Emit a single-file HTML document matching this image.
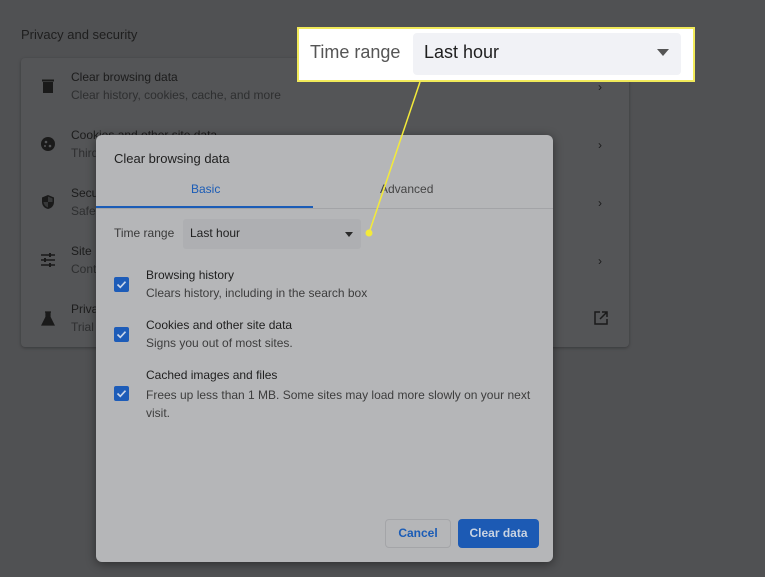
<!DOCTYPE html>
<html><head><style>
*{margin:0;padding:0;box-sizing:border-box}
body{width:765px;height:577px;background:#505153;font-family:"Liberation Sans",Arial,sans-serif;position:relative;overflow:hidden}
.abs{position:absolute}
.t{color:#1f1f1f}
.card{left:21px;top:58px;width:608px;height:289px;background:#545557;border-radius:4px;box-shadow:0 1px 3px rgba(0,0,0,.3)}
.row1{font-size:12px;color:#1c1c1c}
.row2{font-size:12px;color:#2e2f30}
.chev{font-size:12px;color:#1a1a1a;left:598px}
.dlg{left:96px;top:135px;width:457px;height:427px;background:#b5b6b8;border-radius:6px;box-shadow:0 2px 10px rgba(0,0,0,.45)}
.cb{width:15px;height:15px;background:#1d5cb8;border-radius:2px}
.cb svg{display:block}
</style></head><body>
<div class="abs" style="left:21px;top:27px;font-size:13px;color:#1e1e1e">Privacy and security</div>
<div class="abs card"></div>
<svg class="abs" style="left:41px;top:78px" width="14" height="16"><rect x="2" y="4" width="10" height="11" fill="#1a1a1a"/><rect x="1" y="1.5" width="12" height="2" fill="#1a1a1a"/></svg>
<div class="abs row1" style="left:71px;top:70px">Clear browsing data</div>
<div class="abs row2" style="left:71px;top:88px">Clear history, cookies, cache, and more</div>
<svg class="abs" style="left:40px;top:136px" width="16" height="16"><circle cx="8" cy="8" r="7" fill="#1a1a1a"/><circle cx="6" cy="6" r="1.3" fill="#545557"/><circle cx="10" cy="10" r="1.3" fill="#545557"/><circle cx="5" cy="10" r="1" fill="#545557"/></svg>
<div class="abs row1" style="left:71px;top:128px">Cookies and other site data</div>
<div class="abs row2" style="left:71px;top:146px">Third</div>
<svg class="abs" style="left:41px;top:194px" width="14" height="16"><path d="M7 1L1 3.5V8c0 3.5 2.6 6.4 6 7 3.4-.6 6-3.5 6-7V3.5z" fill="#1a1a1a"/><path d="M7 2.5V8H2.5c.3 2.7 2.2 4.8 4.5 5.4V8h4.5V4.5z" fill="#545557" opacity=".5"/></svg>
<div class="abs row1" style="left:71px;top:186px">Secu</div>
<div class="abs row2" style="left:71px;top:204px">Safe</div>
<svg class="abs" style="left:41px;top:253px" width="14" height="14"><path d="M0 2h14M0 7h14M0 12h14" stroke="#1a1a1a" stroke-width="1.6"/><rect x="8" y="0" width="2" height="4" fill="#1a1a1a"/><rect x="3" y="5" width="2" height="4" fill="#1a1a1a"/><rect x="8" y="10" width="2" height="4" fill="#1a1a1a"/></svg>
<div class="abs row1" style="left:71px;top:244px">Site</div>
<div class="abs row2" style="left:71px;top:262px">Cont</div>
<svg class="abs" style="left:41px;top:311px" width="14" height="15"><path d="M4 1h6M5 1v5L1 14h12L9 6V1" fill="#1a1a1a" stroke="#1a1a1a" stroke-width="1.2"/></svg>
<div class="abs row1" style="left:71px;top:302px">Priva</div>
<div class="abs row2" style="left:71px;top:320px">Trial</div>
<div class="abs chev" style="top:80px">›</div>
<div class="abs chev" style="top:138px">›</div>
<div class="abs chev" style="top:196px">›</div>
<div class="abs chev" style="top:254px">›</div>
<svg class="abs" style="left:594px;top:311px" width="14" height="14"><path d="M6 1H1v12h12V8M8 1h5v5M13 1L6 8" stroke="#1a1a1a" stroke-width="1.5" fill="none"/></svg>

<div class="abs dlg">
 <div class="abs t" style="left:18px;top:16px;font-size:13px">Clear browsing data</div>
 <div class="abs" style="left:95px;top:47px;font-size:12px;color:#1b5cb6">Basic</div>
 <div class="abs" style="left:284px;top:47px;font-size:12px;color:#444">Advanced</div>
 <div class="abs" style="left:0;top:73px;width:457px;height:1px;background:#a3a4a7"></div>
 <div class="abs" style="left:0;top:71px;width:217px;height:2px;background:#1b5cb6"></div>
 <div class="abs" style="left:18px;top:91px;font-size:12px;color:#3a3a3a">Time range</div>
 <div class="abs" style="left:87px;top:84px;width:178px;height:30px;background:#aeafb2;border-radius:3px"></div>
 <div class="abs t" style="left:94px;top:91px;font-size:12px">Last hour</div>
 <div class="abs" style="left:249px;top:97px;border:4px solid transparent;border-top:5px solid #2a2a2a"></div>
 <div class="abs cb" style="left:18px;top:142px"><svg width="15" height="15"><path d="M3.5 7.5l2.8 2.8 5.2-5.6" stroke="#c9d6ea" stroke-width="1.7" fill="none"/></svg></div>
 <div class="abs t" style="left:50px;top:133px;font-size:12px">Browsing history</div>
 <div class="abs" style="left:50px;top:151px;font-size:12px;color:#3d3d3d">Clears history, including in the search box</div>
 <div class="abs cb" style="left:18px;top:192px"><svg width="15" height="15"><path d="M3.5 7.5l2.8 2.8 5.2-5.6" stroke="#c9d6ea" stroke-width="1.7" fill="none"/></svg></div>
 <div class="abs t" style="left:50px;top:183px;font-size:12px">Cookies and other site data</div>
 <div class="abs" style="left:50px;top:201px;font-size:12px;color:#3d3d3d">Signs you out of most sites.</div>
 <div class="abs cb" style="left:18px;top:251px"><svg width="15" height="15"><path d="M3.5 7.5l2.8 2.8 5.2-5.6" stroke="#c9d6ea" stroke-width="1.7" fill="none"/></svg></div>
 <div class="abs t" style="left:50px;top:233px;font-size:12px">Cached images and files</div>
 <div class="abs" style="left:50px;top:251px;width:390px;font-size:12px;line-height:18px;color:#3d3d3d">Frees up less than 1 MB. Some sites may load more slowly on your next visit.</div>
 <div class="abs" style="left:289px;top:384px;width:66px;height:29px;border:1px solid #a4a5a8;border-radius:4px;font-size:12px;color:#1b5cb6;text-align:center;line-height:27px;font-weight:bold">Cancel</div>
 <div class="abs" style="left:362px;top:384px;width:81px;height:29px;background:#1c5ab4;border-radius:4px;font-size:12px;color:#c9d3e2;text-align:center;line-height:29px;font-weight:bold">Clear data</div>
</div>
<svg class="abs" style="left:0;top:0" width="765" height="577">
<line x1="420" y1="82" x2="369" y2="233" stroke="#f3ea3a" stroke-width="1.5"/>
<circle cx="369" cy="233" r="3.5" fill="#f3ea3a"/>
</svg>
<div class="abs" style="left:297px;top:27px;width:398px;height:55px;background:#fff;border:2.5px solid #f1ea5a"></div>
<div class="abs" style="left:310px;top:42px;font-size:18px;color:#555">Time range</div>
<div class="abs" style="left:413px;top:33px;width:268px;height:42px;background:#f1f2f6;border-radius:4px"></div>
<div class="abs" style="left:424px;top:42px;font-size:18px;color:#1f1f1f">Last hour</div>
<div class="abs" style="left:657px;top:49px;border:6px solid transparent;border-top:7px solid #555"></div>
</body></html>
